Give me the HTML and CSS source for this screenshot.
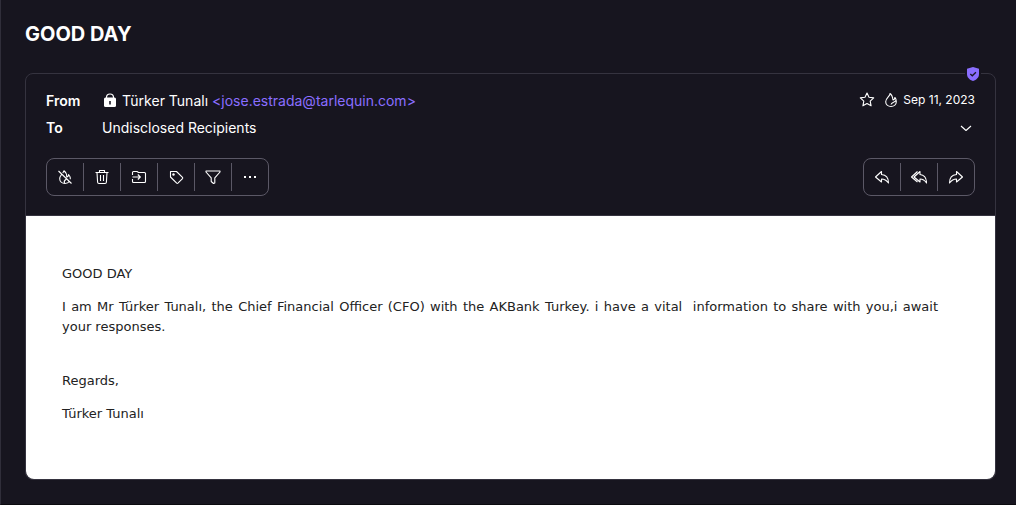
FILE: index.html
```html
<!DOCTYPE html>
<html lang="en">
<head>
<meta charset="utf-8">
<title>GOOD DAY</title>
<link rel="stylesheet" href="styles.css">
</head>
<body>
<main class="view">
  <h1 class="subject">GOOD DAY</h1>
  <article class="message">
    <span class="shield">
      <svg width="14" height="16" viewBox="0 0 14 16"><path d="M7 1 13 2.800V8C13 11.500 10.500 13.800 7 15 3.500 13.800 1 11.500 1 8V2.800Z" fill="#8a6eff"/><path d="m4.300 8 2 1.800L9.900 6.200" fill="none" stroke="#191723" stroke-width="1.300"/></svg>
    </span>
    <header class="head">
      <div class="meta">
        <dl class="people">
          <dt>From</dt>
          <dd>
            <svg class="lock" width="16" height="16" viewBox="0 0 16 16"><path d="M4.500 6V4.500a3.500 3.500 0 0 1 7 0V6" fill="none" stroke="#fff" stroke-width="1.200"/><rect x="2" y="4.500" width="12" height="9.500" rx="1.500" fill="#fff"/><path d="M7.200 8h1.600v3.500H7.200z" fill="#191723"/></svg>
            <span>Türker Tunalı</span>
            <a class="address" href="mailto:jose.estrada@tarlequin.com">&lt;jose.estrada@tarlequin.com&gt;</a>
          </dd>
          <dt>To</dt>
          <dd>Undisclosed Recipients</dd>
        </dl>
        <div class="info">
          <div class="when">
            <button class="plain" aria-label="Star"><svg class="icon" viewBox="0 0 16 16"><path d="m8 1 2 4.300 4.700.6-3.500 3.200.9 4.700L8 11.500l-4.100 2.300.9-4.700-3.500-3.200 4.700-.6Z"/></svg></button>
            <svg class="icon" viewBox="0 0 16 16"><path d="M7 1.500C7.500 4 2.700 6 2.700 9.800 2.700 12.500 5 14.500 8 14.500s5.300-2 5.300-4.700c0-1.800-.4-3.300-1.400-4.300C11.700 7 11 8 10 8 9.700 5.500 9.300 3 7 1.500ZM12.800 8.500C12 10.500 8.500 10 8 12.500"/></svg>
            <time datetime="2023-09-11">Sep 11, 2023</time>
          </div>
          <button class="plain" aria-label="Show details"><svg class="icon" viewBox="0 0 16 16"><path d="m3 6 5 4.500L13 6"/></svg></button>
        </div>
      </div>
      <div class="bars">
        <div class="bar">
          <button aria-label="Mark as not spam"><svg class="icon" viewBox="0 0 16 16"><path d="M5.800 4 7 1.800C9 3.200 9.700 5 9.800 8c1 0 1.700-1 1.800-2.500 1.200 1.300 1.800 2.900 1.700 4.800M4.500 5.500C3.500 6.800 2.700 8 2.700 9.800c0 2.700 2.300 4.700 5.300 4.700 2 0 3.600-.8 4.500-2.200M7.500 14c-1-2 .5-3 1.700-3.700M1.500 2l13 12.500"/></svg></button>
          <button aria-label="Delete"><svg class="icon" viewBox="0 0 16 16"><path d="M1.500 3.500h13M5.500 3.500v-2h5v2M3 3.500l.6 9.700q.1 1.300 1.400 1.300h6q1.300 0 1.400-1.300L13 3.500M6.500 6v6M9.500 6v6"/></svg></button>
          <button aria-label="Move to folder"><svg class="icon" viewBox="0 0 16 16"><path d="M1.500 6V3.500q0-1 1-1H6l1.500 1h6q1 0 1 1v8q0 1-1 1h-11q-1 0-1-1V10M1.500 8H9M6.800 5.500 9.300 8l-2.500 2.500"/></svg></button>
          <button aria-label="Label"><svg class="icon" viewBox="0 0 16 16"><path d="M2.500 2.500V8l6.200 6.200q.6.500 1.200 0l4.600-4.600q.5-.6 0-1.200L8.500 2.500Z"/><circle class="solid" cx="5.500" cy="5.500" r="1.200"/></svg></button>
          <button aria-label="Filter"><svg class="icon" viewBox="0 0 16 16"><path d="M1 2h14v1L9.800 8.800v5.200L8.500 14.500 6.200 12.500V8.800L1 3Z"/></svg></button>
          <button aria-label="More"><svg class="icon" viewBox="0 0 16 16"><path class="solid" d="M2 7h2v2H2zM7 7h2v2H7zM12 7h2v2h-2z"/></svg></button>
        </div>
        <div class="bar">
          <button aria-label="Reply"><svg class="icon" viewBox="0 0 16 16"><path d="M7.500 2.500 1.500 8l6 5v-3q4 0 7 4 0-8-7-8.500Z"/></svg></button>
          <button aria-label="Reply all"><svg class="icon" viewBox="0 0 16 16"><path d="M9 2.500 3 8l6 5v-3q4 0 6.500 4 0-8-6.500-8.500ZM6.500 2.500.5 8l6 5"/></svg></button>
          <button aria-label="Forward"><svg class="icon" viewBox="0 0 16 16"><path d="m8.500 2.500 6 5.500-6 5v-3q-4 0-7 4 0-8 7-8.500Z"/></svg></button>
        </div>
      </div>
    </header>
    <div class="content">
      <p>GOOD DAY</p>
      <p>I am Mr Türker Tunalı, the Chief Financial Officer (CFO) with the AKBank Turkey. i have a vital&nbsp; information to share with you,i await your responses.</p>
      <p class="closing">Regards,</p>
      <p>Türker Tunalı</p>
    </div>
  </article>
</main>
</body>
</html>
```
FILE: styles.css
```css
* { box-sizing: border-box; }

body {
  margin: 0;
  background: #17151f;
  color: #fff;
  font: 14px/20px Inter, sans-serif;
}

.view {
  min-height: 100vh;
  padding: 20px 20px 24px 24px;
  border-left: 1px solid #302e3a;
  border-bottom: 1px solid #0b0a0f;
}

.subject {
  margin: 0 0 25px;
  font-size: 20px;
  line-height: 28px;
  font-weight: 700;
}

.message {
  position: relative;
  border: 1px solid #35333f;
  border-radius: 8px;
}

.shield {
  position: absolute;
  top: -8px;
  right: 14px;
  display: flex;
  padding: 0 1px;
  background: #17151f;
}

.head { padding: 17px 20px 19px; }

.meta,
.bars {
  display: flex;
  justify-content: space-between;
}

.people {
  display: grid;
  grid-template-columns: 56px auto;
  row-gap: 7px;
  margin: 0 0 20px;
}

.people dt { font-weight: 600; }

.people dd {
  display: flex;
  align-items: center;
  gap: 4px;
  margin: 0;
}

.address {
  color: #8a6eff;
  text-decoration: none;
}

.info {
  display: flex;
  flex-direction: column;
  align-items: flex-end;
  gap: 12px;
  padding-top: 1px;
}

.when {
  display: flex;
  align-items: center;
  gap: 4px;
  font-size: 12px;
  line-height: 16px;
}

.when .plain { padding-right: 4px; }

.plain {
  display: flex;
  padding: 0;
  border: 0;
  background: none;
}

.info > .plain { padding-right: 1px; }

.icon {
  width: 16px;
  height: 16px;
  fill: none;
  stroke: #fff;
  stroke-width: 1.1;
  stroke-linejoin: round;
}

.icon .solid {
  fill: #fff;
  stroke: none;
}

.bar {
  display: flex;
  height: 38px;
  padding: 4px 0;
  border: 1px solid #5b5866;
  border-radius: 8px;
}

.bar button {
  display: flex;
  align-items: center;
  justify-content: center;
  width: 37px;
  padding: 0;
  border: 0;
  border-left: 1px solid #5b5866;
  background: none;
}

.bar button:first-child {
  width: 36px;
  border-left: 0;
}

.content {
  padding: 48px 57px 42px 36px;
  border-top: 1px solid #35333f;
  border-radius: 0 0 8px 8px;
  background: #fff;
  color: #222;
  font: 13px/20px Verdana, "DejaVu Sans", sans-serif;
  text-align: justify;
}

.content p { margin: 0 0 13px; }

.content .closing { margin-top: 34px; }
```
